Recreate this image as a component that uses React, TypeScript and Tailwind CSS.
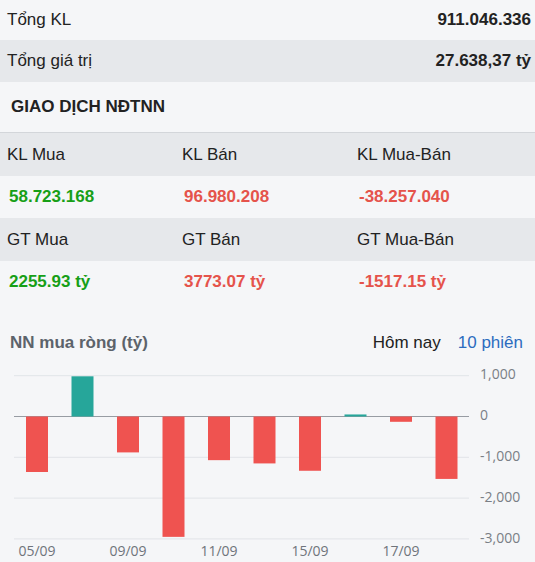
import React from 'react';

const bars = [-1360, 985, -880, -2950, -1070, -1150, -1330, 50, -130, -1530];
const ticks = [
  { v: 1000, label: '1,000' },
  { v: 0, label: '0' },
  { v: -1000, label: '-1,000' },
  { v: -2000, label: '-2,000' },
  { v: -3000, label: '-3,000' },
];
const dates = ['05/09', '09/09', '11/09', '15/09', '17/09'];

const ZERO = 61.5;
const SCALE = 40.8 / 1000;
const yOf = (v: number) => ZERO - v * SCALE;
const cx = (i: number) => 37 + i * 45.5;

const NetChart = () => (
  <svg width={535} height={207} className="block">
    {ticks.map((t) => (
      <g key={t.v}>
        <line
          x1={14}
          x2={469}
          y1={yOf(t.v)}
          y2={yOf(t.v)}
          stroke={t.v === 0 ? '#979ca3' : '#e1e4e8'}
          strokeWidth={1}
        />
        <text
          x={480}
          y={yOf(t.v)}
          dominantBaseline="middle"
          fill="#7a7f86"
          fontSize={14}
          fontFamily="'Open Sans', sans-serif"
        >
          {t.label}
        </text>
      </g>
    ))}
    {bars.map((v, i) => {
      const top = v >= 0 ? yOf(v) : ZERO;
      const h = Math.abs(v) * SCALE;
      return (
        <rect
          key={i}
          x={cx(i) - 11}
          y={top}
          width={22}
          height={Math.max(h, 2)}
          fill={v >= 0 ? '#26a69a' : '#ef5350'}
        />
      );
    })}
    {dates.map((d, i) => (
      <text
        key={d}
        x={cx(i * 2)}
        y={197}
        textAnchor="middle"
        dominantBaseline="middle"
        fill="#6f747b"
        fontSize={14}
        fontFamily="'Open Sans', sans-serif"
      >
        {d}
      </text>
    ))}
  </svg>
);

const Cell = ({ children, className = '' }: { children: React.ReactNode; className?: string }) => (
  <div className={`w-[175px] shrink-0 ${className}`}>{children}</div>
);

export default function App() {
  return (
    <div className="w-[535px] h-[562px] overflow-hidden bg-[#f5f6f8] text-[17px] text-[#222] font-['Liberation_Sans',Arial,sans-serif]">
      <div className="h-[40px] flex items-center justify-between pl-[7px] pr-[4px]">
        <span>Tổng KL</span>
        <span className="font-bold">911.046.336</span>
      </div>
      <div className="h-[42px] flex items-center justify-between pl-[7px] pr-[4px] bg-[#e6e8eb]">
        <span>Tổng giá trị</span>
        <span className="font-bold">27.638,37 tỷ</span>
      </div>
      <div className="h-[51px] flex items-center pl-[11px] font-bold border-b border-[#d3d6da]">
        GIAO DỊCH NĐTNN
      </div>

      <div className="h-[43px] flex items-center pl-[7px] bg-[#e6e8eb]">
        <Cell>KL Mua</Cell>
        <Cell>KL Bán</Cell>
        <Cell>KL Mua-Bán</Cell>
      </div>
      <div className="h-[42px] flex items-center pl-[9px] font-bold">
        <Cell className="text-[#179f17]">58.723.168</Cell>
        <Cell className="text-[#e5534b]">96.980.208</Cell>
        <Cell className="text-[#e5534b]">-38.257.040</Cell>
      </div>
      <div className="h-[43px] flex items-center pl-[7px] bg-[#e6e8eb]">
        <Cell>GT Mua</Cell>
        <Cell>GT Bán</Cell>
        <Cell>GT Mua-Bán</Cell>
      </div>
      <div className="h-[42px] flex items-center pl-[9px] font-bold">
        <Cell className="text-[#179f17]">2255.93 tỷ</Cell>
        <Cell className="text-[#e5534b]">3773.07 tỷ</Cell>
        <Cell className="text-[#e5534b]">-1517.15 tỷ</Cell>
      </div>

      <div className="pt-[28px] h-[52px] flex items-start justify-between pl-[10px] pr-[12px] leading-[24px]">
        <span className="font-bold text-[#5c636b]">NN mua ròng (tỷ)</span>
        <div className="flex gap-[17px]">
          <span className="text-[#222]">Hôm nay</span>
          <span className="text-[#2c6cbf]">10 phiên</span>
        </div>
      </div>
      <NetChart />
    </div>
  );
}
